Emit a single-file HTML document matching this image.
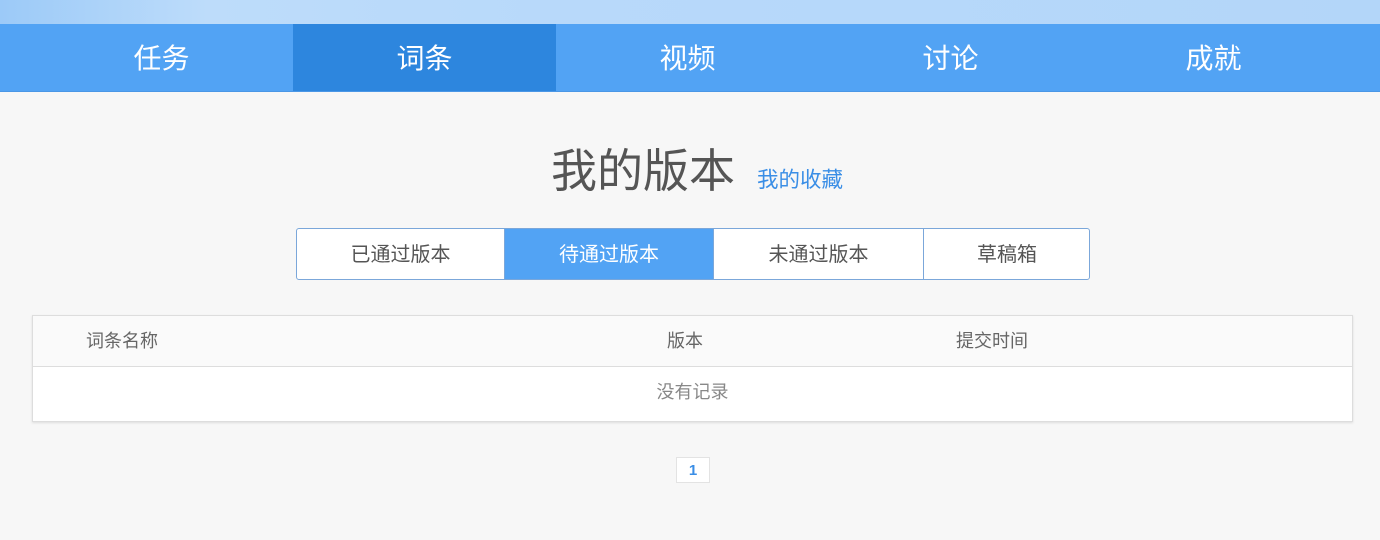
<!DOCTYPE html>
<html><head><meta charset="utf-8"><style>
*{margin:0;padding:0;box-sizing:border-box}
body{width:1380px;height:540px;background:#f7f7f7;font-family:"Liberation Sans","Noto Sans CJK SC",sans-serif;position:relative;overflow:hidden}
.top{position:absolute;left:0;top:0;width:1380px;height:24px;background:linear-gradient(90deg,#9ccaf8 0%,#bddcfa 15%,#b8d9fa 40%,#b3d6f9 100%)}
.nav{position:absolute;left:0;top:24px;width:1380px;height:68px;background:#52a3f4;border-bottom:1px solid #4b97e6}
.nav div{position:absolute;top:0;width:263px;height:67px;line-height:69px;text-align:center;color:#fff;font-size:28px}
.nav .a{background:#2d86de}
.title{position:absolute;left:0;width:1380px;top:135px;text-align:center;padding-left:14px}
.title span.b{font-size:46px;color:#555}
.title span.s{font-size:21.5px;color:#3a8ee6;margin-left:22px}
.tabs{position:absolute;left:296px;top:228px;width:794px;height:52px;border:1px solid #7ba7da;border-radius:3px;background:#fff;overflow:hidden}
.tabs div{position:absolute;top:0;height:50px;line-height:52px;text-align:center;font-size:20px;color:#555;border-right:1px solid #7ba7da}
.tabs .a{background:#52a3f4;color:#fff}
.tbl{position:absolute;left:32px;top:315px;width:1321px;height:107px;border:1px solid #ddd;background:#fff;box-shadow:0 1px 2px #ddd}
.hd{height:51px;background:#fafafa;border-bottom:1px solid #ddd;position:relative;font-size:18px;color:#666}
.hd span{position:absolute;top:11px}
.row{text-align:center;line-height:50px;font-size:18px;color:#888}
.pg{position:absolute;left:676px;top:457px;width:34px;height:26px;border:1px solid #e3e3e3;background:#fff;text-align:center;line-height:26px;font-size:15px;font-weight:bold;color:#3a8ee6}
</style></head><body>
<div class="top"></div>
<div class="nav">
<div style="left:30px">任务</div><div class="a" style="left:293px">词条</div><div style="left:556px">视频</div><div style="left:819px">讨论</div><div style="left:1082px">成就</div>
</div>
<div class="title"><span class="b">我的版本</span><span class="s">我的收藏</span></div>
<div class="tabs">
<div style="left:0;width:208px">已通过版本</div><div class="a" style="left:208px;width:209px">待通过版本</div><div style="left:417px;width:210px">未通过版本</div><div style="left:627px;width:166px;border-right:none">草稿箱</div>
</div>
<div class="tbl">
<div class="hd"><span style="left:53px">词条名称</span><span style="left:634px">版本</span><span style="left:923px">提交时间</span></div>
<div class="row">没有记录</div>
</div>
<div class="pg">1</div>
</body></html>
